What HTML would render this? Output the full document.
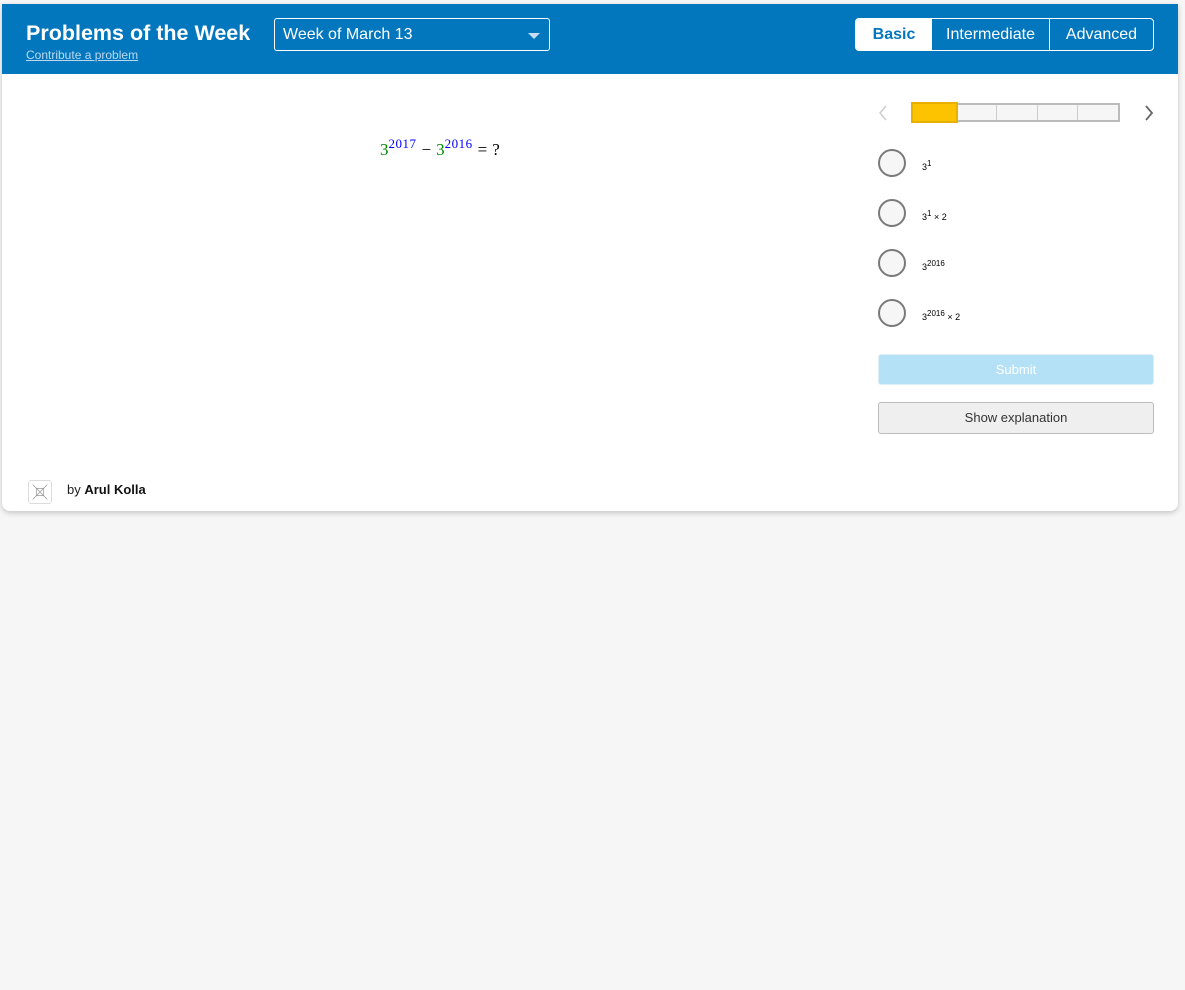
<!DOCTYPE html>
<html><head><meta charset="utf-8"><style>
*{box-sizing:border-box;margin:0;padding:0}
body{width:1185px;height:990px;background:#f6f6f6;font-family:"Liberation Sans",sans-serif;position:relative;overflow:hidden}
.card{position:absolute;left:2px;top:4px;width:1176px;height:507px;background:#fff;border-radius:0 0 8px 8px;box-shadow:0 2px 6px rgba(0,0,0,.2)}
.hdr{position:absolute;left:0;top:0;width:1176px;height:70px;background:#0377bd}
.title{position:absolute;left:24px;top:17px;color:#fff;font-weight:bold;font-size:21.5px}
.contrib{position:absolute;left:24px;top:44px;color:#bcd8ee;font-size:12px;text-decoration:underline}
.sel{position:absolute;left:272px;top:14px;width:276px;height:33px;border:1px solid #fff;border-radius:3px;color:#fff;font-size:16px;padding:7px 8px}
.sel:after{content:"";position:absolute;right:9px;top:14px;border:6px solid transparent;border-top:6px solid #c5dff1;border-bottom:0}
.tabs{position:absolute;left:853px;top:14px;width:299px;height:33px;border:1px solid #fff;border-radius:4px;display:flex;overflow:hidden}
.tabs div{height:100%;display:flex;align-items:center;justify-content:center;color:#fff;font-size:16px}
.t1{width:76px;background:#fff;color:#0377bd!important;font-weight:bold}
.t2{width:118px;border-right:1px solid #fff}
.t3{flex:1}
.eq{position:absolute;left:378px;top:132px;font-family:"Liberation Serif",serif;font-size:17px;white-space:nowrap}
.eq sup{font-size:13px;color:#00f;vertical-align:7px;letter-spacing:.5px}
.g{color:#080}
.op{margin:0 5px}
.prog{position:absolute;left:910px;top:99px;width:208px;height:19px;border:2px solid #bbb;background:#f6f6f6;display:flex}
.prog div{flex:1;border-right:1px solid #ccc}
.prog div:last-child{border:0}
.prog .on{background:#fdc300;outline:2px solid #e8b000;outline-offset:-1px;margin:-2px 0 -2px -2px;flex:1.1}
.opt{position:absolute;left:876px;width:28px;height:28px;border:2px solid #7a7a7a;border-radius:50%;background:#f6f6f6}
.ol{position:absolute;left:920px;font-family:"Liberation Sans",sans-serif;font-size:9px}
.ol sup{font-size:8px}
.sub{position:absolute;left:876px;top:350px;width:276px;height:31px;background:#b5e1f6;border:1px solid #ddeef8;border-radius:3px;color:#fff;font-size:13px;text-align:center;line-height:29px}
.exp{position:absolute;left:876px;top:398px;width:276px;height:32px;background:#efefef;border:1px solid #bbb;border-radius:3px;color:#333;font-size:13px;text-align:center;line-height:30px}
.by{position:absolute;left:65px;top:478px;font-size:13px;color:#222}
.by b{color:#111}
.av{position:absolute;left:26px;top:476px;width:24px;height:24px;border:1px solid #ddd;border-radius:3px}
</style></head><body>
<div class="card">
<div class="hdr">
<div class="title">Problems of the Week</div>
<div class="contrib">Contribute a problem</div>
<div class="sel">Week of March 13</div>
<div class="tabs"><div class="t1">Basic</div><div class="t2">Intermediate</div><div class="t3">Advanced</div></div>
</div>
<div class="eq"><span class="g">3</span><sup>2017</sup><span class="op">−</span><span class="g">3</span><sup>2016</sup><span class="op">=</span>?</div>
<svg style="position:absolute;left:874px;top:100px" width="14" height="18"><path d="M10 2 L4 9 L10 16" stroke="#ccc" stroke-width="1.5" fill="none"/></svg>
<svg style="position:absolute;left:1140px;top:100px" width="14" height="18"><path d="M4 2 L10 9 L4 16" stroke="#666" stroke-width="1.8" fill="none"/></svg>
<div class="prog"><div class="on"></div><div></div><div></div><div></div><div></div></div>
<div class="opt" style="top:145px"></div><div class="ol" style="top:155px">3<sup>1</sup></div>
<div class="opt" style="top:195px"></div><div class="ol" style="top:205px">3<sup>1</sup> × 2</div>
<div class="opt" style="top:245px"></div><div class="ol" style="top:255px">3<sup>2016</sup></div>
<div class="opt" style="top:295px"></div><div class="ol" style="top:305px">3<sup>2016</sup> × 2</div>
<div class="sub">Submit</div>
<div class="exp">Show explanation</div>
<svg class="av" viewBox="0 0 24 24"><path d="M4 4 L20 20 M20 4 L4 20 M8 8 H16 V16 H8 Z" stroke="#999" stroke-width=".8" fill="none"/></svg>
<div class="by">by <b>Arul Kolla</b></div>
</div>
</body></html>
